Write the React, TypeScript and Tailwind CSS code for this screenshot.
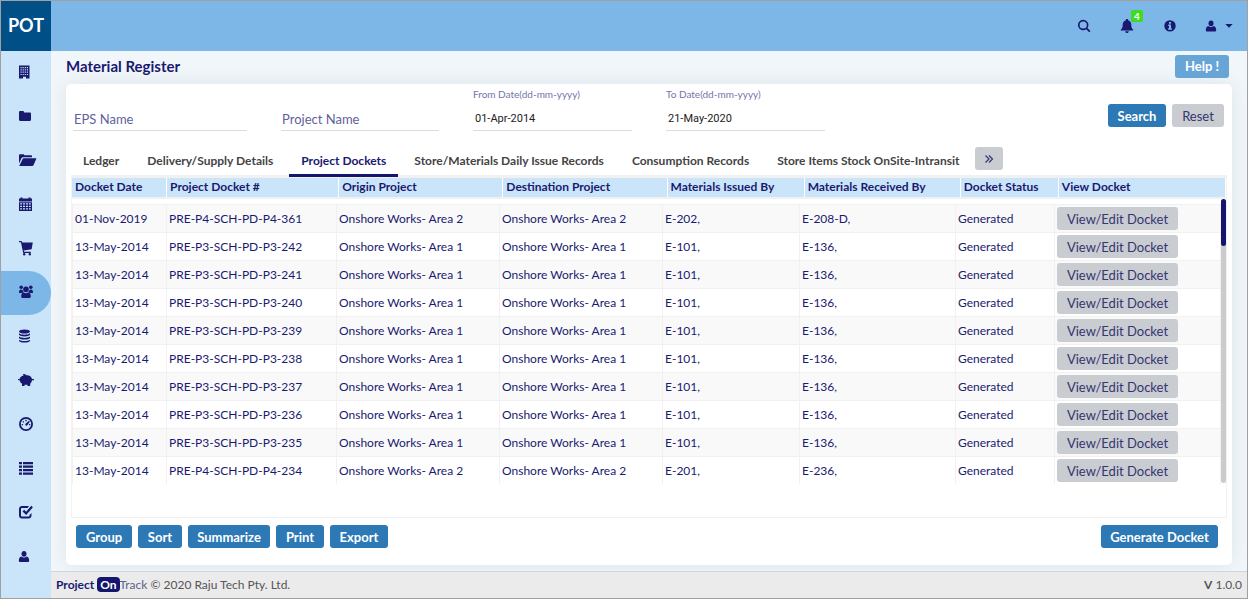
import React, { useState } from "react";
import type { ReactNode } from "react";

type IconProps = { className?: string; children: ReactNode };

function Svg({ className = "size-4", children }: IconProps) {
  return (
    <svg viewBox="0 0 16 16" className={className} fill="currentColor" aria-hidden="true">
      {children}
    </svg>
  );
}

const userShape = (
  <>
    <ellipse cx="8" cy="5.300" rx="2.500" ry="2.900" />
    <path d="M4.300 13.600c-.9 0-1.500-.5-1.500-1.400 0-2.300.9-4.100 2.600-4.300.8.800 1.600 1.100 2.600 1.100s1.800-.3 2.600-1.100c1.700.2 2.600 2 2.600 4.300 0 .9-.6 1.400-1.500 1.400z" />
  </>
);

const menu: { label: string; icon: ReactNode }[] = [
  {
    label: "Enterprise",
    icon: (
      <path
        fillRule="evenodd"
        d="M1 1.500h10.500v13H8v-1.800H5v1.800H1zM2.500 3v1.200h1.200V3zm2.100 0v1.200h1.200V3zm2.100 0v1.200h1.200V3zm2.100 0v1.200H10V3zM2.500 5.300v1.200h1.200V5.300zm2.100 0v1.200h1.200V5.300zm2.100 0v1.200h1.200V5.300zm2.100 0v1.200H10V5.300zM2.500 7.600v1.200h1.200V7.600zm2.100 0v1.200h1.200V7.600zm2.100 0v1.200h1.200V7.600zm2.100 0v1.200H10V7.600zM2.500 9.900v1.200h1.200V9.900zm2.100 0v1.200h1.200V9.900zm2.100 0v1.200h1.200V9.900zm2.100 0v1.200H10V9.900z"
      />
    ),
  },
  { label: "Folder", icon: <path d="M1 4.200C1 3.500 1.500 3 2.200 3h2.600C5.500 3 6 3.500 6 4.200v.3h5.800c.7 0 1.200.5 1.200 1.200v6.100c0 .7-.5 1.200-1.200 1.200H2.200C1.500 13 1 12.500 1 11.800z" /> },
  {
    label: "Open folder",
    icon: (
      <>
        <path d="M1 11.500V3.500C1 2.700 1.500 2.200 2.200 2.200h3c.7 0 1.100.4 1.100 1.100h6.600c.7 0 1.100.5 1.100 1.200v.7H5.300c-.9 0-1.600.5-2 1.300z" />
        <path d="M1.200 14l3.300-6.800c.3-.6.7-.9 1.300-.9H18.500L15.600 13c-.3.700-.8 1-1.400 1z" />
      </>
    ),
  },
  {
    label: "Calendar",
    icon: (
      <>
        <path d="M1 2.500h1.500v-1h2v1h6v-1h2v1H14v3H1z" />
        <path fillRule="evenodd" d="M1 6.300h13v8.700H1zM2.200 7.200v1.300H4V7.200zM5 7.200v1.300h2V7.200zm3 0v1.300h2V7.200zm3 0v1.300h1.800V7.200zM2.200 9.700V11H4V9.700zm2.800 0V11h2V9.700zm3 0V11h2V9.700zm3 0V11h1.800V9.700zM2.200 12.200v1.300H4v-1.300zm2.800 0v1.300h2v-1.300zm3 0v1.300h2v-1.300zm3 0v1.300h1.800v-1.300z" />
      </>
    ),
  },
  {
    label: "Cart",
    icon: (
      <>
        <path d="M1 1h2.500l.8 1.500h10.500l-1.200 6.800-7.900 1.200.4 1.300h6.700V13H5.200L2.900 2.200H1z" />
        <circle cx="6.200" cy="14.200" r="1.200" />
        <circle cx="11.800" cy="14.200" r="1.200" />
      </>
    ),
  },
  {
    label: "People",
    icon: (
      <>
        <circle cx="3.200" cy="3.200" r="1.800" />
        <circle cx="12.800" cy="3.200" r="1.800" />
        <circle cx="8" cy="5.200" r="2.800" />
        <path d="M1 8.500C1 6.600 1.700 5.500 3 5.500c.7.400 1 .5 1.600.4C4.800 7 5.300 7.600 6 8.200c-.8.100-1.400.3-1.900.9H2C1.300 9.100 1 9 1 8.500zM15 8.500c0-1.900-.7-3-2-3-.7.400-1 .5-1.600.4-.2 1.100-.7 1.700-1.400 2.300.8.100 1.400.3 1.900.9H14c.7 0 1-.1 1-.6z" />
        <path d="M3.200 12.500c0-2.500 1-4 2.500-4 .8.600 1.500.8 2.300.8s1.500-.2 2.300-.8c1.500 0 2.500 1.500 2.500 4 0 .9-.6 1.500-1.500 1.500H4.700c-.9 0-1.500-.6-1.500-1.500z" />
      </>
    ),
  },
  {
    label: "Database",
    icon: (
      <>
        <ellipse cx="6.500" cy="3.500" rx="5.500" ry="2" />
        <path d="M1 5.300c1.500 1.200 3.300 1.400 5.500 1.400s4-.2 5.500-1.400v1.500c-.8 1.200-3 1.700-5.500 1.700S1.800 8 1 6.800zM1 8.500c1.500 1.100 3.300 1.400 5.500 1.400s4-.3 5.500-1.400V10c-.8 1.200-3 1.600-5.500 1.600S1.800 11.200 1 10zM1 11.700c1.500 1.100 3.300 1.400 5.500 1.400s4-.3 5.500-1.400v1.200c-.8 1.200-3 1.700-5.500 1.700s-4.700-.5-5.500-1.700z" />
      </>
    ),
  },
  {
    label: "Budget",
    icon: (
      <path d="M0 7l1.500.3C2 5 3.500 4 5.500 3.500L5 2c2 0 3 .7 3.500 1.200C11.500 3 13.500 4.500 14 7h2v1.200h-2c-.2 1.600-.9 2.700-1.800 3.500V14H9.500v-1.200h-3V14H4v-2.300C2.800 11 2 10 1.800 8.500L0 8z" />
    ),
  },
  {
    label: "Dashboard",
    icon: (
      <>
        <path fillRule="evenodd" d="M8 1a7 7 0 1 0 0 14A7 7 0 0 0 8 1zm0 1.800a5.200 5.200 0 1 1 0 10.400A5.200 5.200 0 0 1 8 2.800z" />
        <path d="M7.300 3.800h1.400v1.400H7.300zM4.700 5.200H6v1.300H4.700zM3.700 8H5v1.300H3.700zM11 8h1.300v1.300H11zM11 4.800l.9.800-2.500 3.600c-.5.700-1.900.6-2.100-.4-.1-.5.100-.9.500-1.200z" />
      </>
    ),
  },
  {
    label: "Tasks",
    icon: <path d="M1 2h3v2.300H1zM5 2h10v2.300H5zM1 5.500h3v2.300H1zM5 5.500h10v2.300H5zM1 9h3v2.300H1zM5 9h10v2.300H5zM1 12.500h3v2.300H1zM5 12.500h10v2.300H5z" />,
  },
  {
    label: "Approvals",
    icon: (
      <>
        <path d="M11 2H4C2.300 2 1 3.300 1 5v6.500c0 1.700 1.300 3 3 3h6.500c1.700 0 3-1.300 3-3V9l-2 2v.5c0 .7-.4 1-1 1H4c-.6 0-1-.4-1-1V5c0-.6.4-1 1-1h5.500z" />
        <path d="M13.300 1.800l1.600 1.500-6.700 7.800-3.700-3.700 1.700-1.600 1.900 1.900z" />
      </>
    ),
  },
  { label: "Account", icon: <g transform="translate(-2 0.500)">{userShape}</g> },
];

const tabs = [
  "Ledger",
  "Delivery/Supply Details",
  "Project Dockets",
  "Store/Materials Daily Issue Records",
  "Consumption Records",
  "Store Items Stock OnSite-Intransit",
];

const columns = [
  "Docket Date",
  "Project Docket #",
  "Origin Project",
  "Destination Project",
  "Materials Issued By",
  "Materials Received By",
  "Docket Status",
  "View Docket",
];

const dockets = [
  ["01-Nov-2019", "PRE-P4-SCH-PD-P4-361", 2, "E-202,", "E-208-D,"],
  ["13-May-2014", "PRE-P3-SCH-PD-P3-242", 1, "E-101,", "E-136,"],
  ["13-May-2014", "PRE-P3-SCH-PD-P3-241", 1, "E-101,", "E-136,"],
  ["13-May-2014", "PRE-P3-SCH-PD-P3-240", 1, "E-101,", "E-136,"],
  ["13-May-2014", "PRE-P3-SCH-PD-P3-239", 1, "E-101,", "E-136,"],
  ["13-May-2014", "PRE-P3-SCH-PD-P3-238", 1, "E-101,", "E-136,"],
  ["13-May-2014", "PRE-P3-SCH-PD-P3-237", 1, "E-101,", "E-136,"],
  ["13-May-2014", "PRE-P3-SCH-PD-P3-236", 1, "E-101,", "E-136,"],
  ["13-May-2014", "PRE-P3-SCH-PD-P3-235", 1, "E-101,", "E-136,"],
  ["13-May-2014", "PRE-P4-SCH-PD-P4-234", 2, "E-201,", "E-236,"],
];

const blueButton = "h-[23px] rounded-[3px] bg-[#2d79b5] text-[13px] leading-4 font-bold text-white";
const grayButton = "h-[23px] rounded-[3px] bg-[#c9ccd1] text-[13px] leading-4 text-[#35356f]";
const field = "h-6 w-full border-b border-[#dcdcdc] bg-transparent outline-none";

function TopBar() {
  return (
    <header className="flex h-[50px] bg-[#7cb7e8]">
      <div className="flex w-[50px] items-center justify-center bg-[#004f87] pb-0.5 text-lg font-bold text-white">
        POT
      </div>
      <nav className="ml-auto flex items-center pr-[10px]" aria-label="Tools">
        <button type="button" aria-label="Search" className="mr-[27px]">
          <Svg>
            <path fillRule="evenodd" d="M7.200 1.800a5.200 5.200 0 1 0 3 9.400l3 3 1.300-1.200-3-3.100A5.200 5.200 0 0 0 7.200 1.800zm0 1.600a3.600 3.600 0 1 1 0 7.200 3.600 3.600 0 0 1 0-7.200z" />
          </Svg>
        </button>
        <button type="button" aria-label="Notifications, 4 new" className="relative mr-[27px]">
          <Svg>
            <path d="M8 1c.8 0 1.200.5 1.200 1.200C11.300 2.800 12.300 4.500 12.300 7c0 2.500.5 3.500 1.900 4.700v.8H1.800v-.8C3.200 10.500 3.700 9.500 3.700 7c0-2.500 1-4.200 3.100-4.800C6.800 1.500 7.200 1 8 1zM6.200 13.200h3.600C9.700 14.300 9 15 8 15s-1.700-.7-1.800-1.800z" />
          </Svg>
          <span className="absolute -top-2 left-3 flex h-3 w-3 items-center justify-center rounded-[2px] bg-[#3ddc1f] text-[10px] leading-3 font-bold text-white">
            4
          </span>
        </button>
        <button type="button" aria-label="Information" className="mr-[25px]">
          <Svg>
            <path fillRule="evenodd" d="M8 2.200a5.700 5.700 0 1 0 0 11.400A5.700 5.700 0 0 0 8 2.200zM7 4.100h2v1.700H7zM6.200 6.600H9v3.700h.9v1.400H6.100v-1.400H7V8h-.8z" />
          </Svg>
        </button>
        <button type="button" aria-label="Account menu" className="flex items-center gap-0.5">
          <Svg>{userShape}</Svg>
          <Svg>
            <path d="M4.300 6h7.400L8 9.800z" />
          </Svg>
        </button>
      </nav>
    </header>
  );
}

function SideBar() {
  return (
    <nav className="w-[50px] shrink-0 bg-[#cae5f9]" aria-label="Main">
      <ul>
        {menu.map((item, i) => (
          <li key={item.label}>
            <a
              href="#"
              aria-label={item.label}
              className={
                i === 5
                  ? "flex h-11 items-center rounded-r-full bg-[#7cb7e8] pb-0.5 pl-[17px]"
                  : "flex h-11 items-center pb-0.5 pl-[17px]"
              }
            >
              <Svg className="size-4 overflow-visible">{item.icon}</Svg>
            </a>
          </li>
        ))}
      </ul>
    </nav>
  );
}

function Filters() {
  return (
    <form className="flex items-end pt-1" onSubmit={(e) => e.preventDefault()}>
      <div className="grid flex-1 grid-cols-[174fr_158fr_159fr_159fr] items-end gap-x-[34px] pl-0.5">
        <input aria-label="EPS Name" placeholder="EPS Name" className={`${field} px-px text-[13px] placeholder:text-[#5f5f9c]`} />
        <input aria-label="Project Name" placeholder="Project Name" className={`${field} px-px text-[13px] placeholder:text-[#5f5f9c]`} />
        <div>
          <label htmlFor="from" className="block h-4 text-[10px] leading-3 text-[#7474ab]">
            From Date(dd-mm-yyyy)
          </label>
          <input id="from" defaultValue="01-Apr-2014" className={`${field} px-0.5 font-[Roboto] text-[11px] text-[#222222]`} />
        </div>
        <div>
          <label htmlFor="to" className="block h-4 text-[10px] leading-3 text-[#7474ab]">
            To Date(dd-mm-yyyy)
          </label>
          <input id="to" defaultValue="21-May-2020" className={`${field} px-0.5 font-[Roboto] text-[11px] text-[#222222]`} />
        </div>
      </div>
      <div className="mr-[3px] mb-1 flex w-[399px] justify-end gap-1.5">
        <button type="submit" className={`${blueButton} w-[58px]`}>Search</button>
        <button type="reset" className={`${grayButton} w-[52px]`}>Reset</button>
      </div>
    </form>
  );
}

function Tabs() {
  const [active, setActive] = useState(2);
  return (
    <div className="relative z-10 mt-4 -mb-0.5 flex items-start gap-1" role="tablist">
      {tabs.map((tab, i) => (
        <button
          key={tab}
          type="button"
          role="tab"
          aria-selected={i === active}
          onClick={() => setActive(i)}
          className={
            i === active
              ? "h-[30px] border-b-3 border-[#15156e] px-3 text-xs font-bold"
              : "h-[30px] border-b-3 border-transparent px-3 text-xs font-bold text-[#444444]"
          }
        >
          {tab}
        </button>
      ))}
      <button type="button" aria-label="More tabs" className={`${grayButton} flex w-7 items-center justify-center`}>
        <svg viewBox="0 0 10 10" className="size-[10px]" fill="none" stroke="currentColor" strokeWidth="1.2" aria-hidden="true">
          <path d="M1.500 1.500L5 5 1.500 8.500M5 1.500L8.500 5 5 8.500" />
        </svg>
      </button>
    </div>
  );
}

function DocketTable() {
  return (
    <div className="relative h-[343px] border-x border-b border-[#f1f1f1]">
      <table className="block w-full text-left text-xs">
        <thead className="block border-t-3 border-b-2 border-[#f1f1f1]">
          <tr className="grid grid-cols-[95fr_172fr_164fr_164fr_137fr_156fr_98fr_167fr]">
            {columns.map((c) => (
              <th key={c} scope="col" className="h-[19px] border-r border-white bg-[#cae5f9] pl-[3px] leading-[18px] font-bold whitespace-nowrap">
                {c}
              </th>
            ))}
          </tr>
        </thead>
        <tbody className="mt-[5px] mr-[5px] block border-l border-[#f1f1f1]">
          {dockets.map(([date, no, area, issued, received]) => (
            <tr
              key={no}
              className="grid h-7 grid-cols-[94fr_170fr_163fr_163fr_137fr_156fr_99fr_166fr] border-t border-[#f1f1f1] odd:bg-[#f9f9f9] [&>td]:overflow-hidden [&>td]:border-r [&>td]:border-[#f1f1f1] [&>td]:pl-0.5 [&>td]:leading-[27px] [&>td]:whitespace-nowrap"
            >
              <td>{date}</td>
              <td>{no}</td>
              <td>Onshore Works- Area {area}</td>
              <td>Onshore Works- Area {area}</td>
              <td>{issued}</td>
              <td>{received}</td>
              <td>Generated</td>
              <td className="flex items-center">
                <button type="button" className={`${grayButton} w-[121px]`}>View/Edit Docket</button>
              </td>
            </tr>
          ))}
        </tbody>
      </table>
      <div className="absolute top-6 right-0 h-[284px] w-[5px] rounded-sm bg-[#cbcbcb]" aria-hidden="true">
        <div className="h-[47px] rounded-sm bg-[#15156e]" />
      </div>
    </div>
  );
}

export default function App() {
  return (
    <div className="flex min-h-screen flex-col border border-[#a0a0a0] font-[Lato,sans-serif] text-[#191970]">
      <TopBar />
      <div className="flex flex-1">
        <SideBar />
        <div className="flex min-w-0 flex-1 flex-col">
          <main className="flex-1 bg-[#f0f6f9] px-[15px]">
            <div className="flex h-[33px] items-center justify-between pr-[3px] pb-0.5">
              <h1 className="text-[15px] font-bold">Material Register</h1>
              <button type="button" className="h-[23px] w-[54px] rounded-[3px] bg-[#68a5d7] text-[13px] font-bold text-white">
                Help !
              </button>
            </div>
            <section className="rounded-[5px] bg-white px-[5px] pb-[17px] shadow-[0_0_20px_rgba(0,40,60,0.08)]">
              <Filters />
              <Tabs />
              <DocketTable />
              <div className="mt-[7px] flex gap-1.5 px-[5px]">
                <button type="button" className={`${blueButton} w-14`}>Group</button>
                <button type="button" className={`${blueButton} w-11`}>Sort</button>
                <button type="button" className={`${blueButton} w-[82px]`}>Summarize</button>
                <button type="button" className={`${blueButton} w-[48px]`}>Print</button>
                <button type="button" className={`${blueButton} w-[58px]`}>Export</button>
                <button type="button" className={`${blueButton} mr-1 ml-auto w-[117px]`}>Generate Docket</button>
              </div>
            </section>
          </main>
          <footer className="flex h-[27px] items-center justify-between border-t border-[#cdd7e2] bg-[#ebebeb] px-[5px] text-xs text-[#555555]">
            <p>
              <b className="text-[#191970]">Project </b>
              <b className="rounded bg-[#15156e] px-[3px] text-white">On</b>
              <span className="text-[#5f5f8c]">Track</span> © 2020 Raju Tech Pty. Ltd.
            </p>
            <p>
              <b>V</b> 1.0.0
            </p>
          </footer>
        </div>
      </div>
    </div>
  );
}
